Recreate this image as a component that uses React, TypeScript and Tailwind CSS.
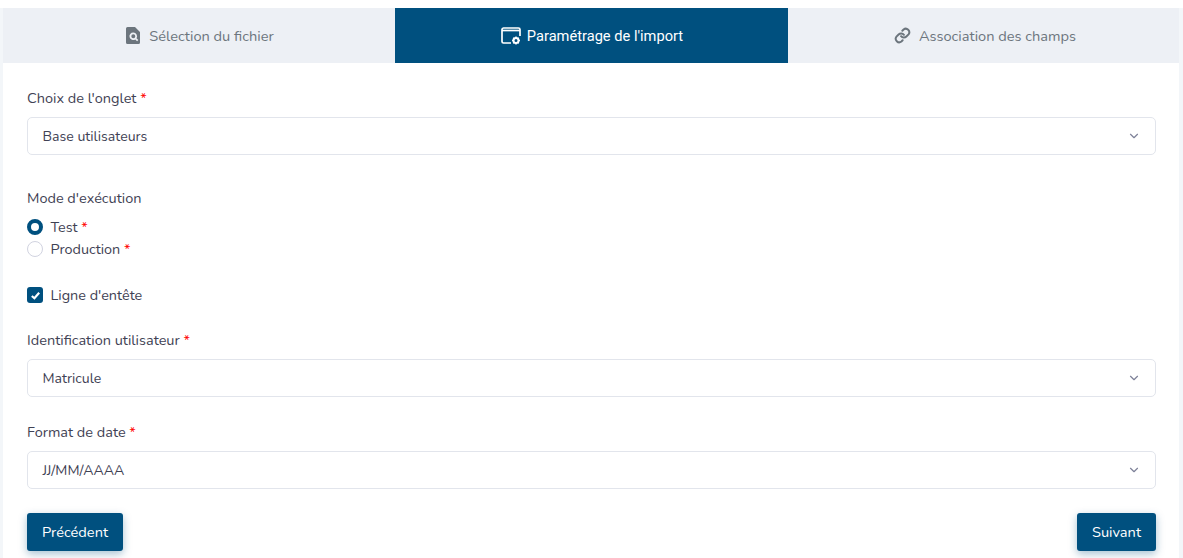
import { ChevronDown } from "lucide-react";

function Star() {
  return <span className="text-[#f00]"> *</span>;
}

function SelectField({ label, value }: { label: string; value: string }) {
  return (
    <div>
      <div className="h-[21px] pt-px text-[14.500px] leading-[21px] text-[#3f4254]">
        {label}
        <Star />
      </div>
      <div className="mt-[9px] flex h-[38px] items-center justify-between rounded-[5px] border border-[#e2e5ec] bg-white pl-[14.500px] pr-[14px] text-[14.100px] text-[#3f4254]">
        <span className="pt-[2px]">{value}</span>
        <ChevronDown className="h-[14px] w-[14px] text-[#7e8299]" strokeWidth={2} />
      </div>
    </div>
  );
}

function SearchFileIcon() {
  return (
    <svg viewBox="0 0 14 17" className="h-[17px] w-[14px]">
      <path
        fill="#6c757d"
        fillRule="evenodd"
        d="M1.500 0H9l5 5v10.500a1.500 1.500 0 0 1-1.500 1.500h-11A1.500 1.500 0 0 1 0 15.500v-14A1.500 1.500 0 0 1 1.500 0ZM7.300 5.500a3.800 3.800 0 1 0 2 7l1.800 1.800 1.200-1.200-1.800-1.800a3.800 3.800 0 0 0-3.200-5.800Zm0 1.800a2 2 0 1 1 0 4 2 2 0 0 1 0-4Z"
      />
    </svg>
  );
}

function WindowGearIcon() {
  return (
    <svg viewBox="0 0 20 18" className="h-[18px] w-5" fill="none">
      <path
        stroke="#fff"
        strokeWidth="1.700"
        d="M10 16H2.500A1.600 1.600 0 0 1 1 14.400V2.600A1.600 1.600 0 0 1 2.500 1h14.900A1.600 1.600 0 0 1 19 2.600V9"
      />
      <path stroke="#fff" strokeWidth="1.700" d="M1 3.500h18" />
      <circle cx="15" cy="13.500" r="2.500" stroke="#fff" strokeWidth="2" />
      <path
        stroke="#fff"
        strokeWidth="1.400"
        d="M15 9.500v1.500M15 16v1.500M11 13.500h1.500M17.500 13.500H19M12.200 10.700l1 1M16.800 15.300l1 1M12.200 16.300l1-1M16.800 11.700l1-1"
      />
    </svg>
  );
}

function LinkIcon() {
  return (
    <svg viewBox="0 0 24 24" className="h-[17px] w-[17px]" fill="none" stroke="#6c757d" strokeWidth="2.800" strokeLinecap="round">
      <path d="M10 13a5 5 0 0 0 7.500.5l3-3a5 5 0 0 0-7-7l-1.700 1.700" />
      <path d="M14 11a5 5 0 0 0-7.500-.5l-3 3a5 5 0 0 0 7 7l1.700-1.700" />
    </svg>
  );
}

export default function App() {
  return (
    <div className="h-[558px] w-[1183px] overflow-hidden bg-white font-['Nunito','Noto_Sans','Open_Sans',sans-serif]">
      <div className="h-2 bg-white" />
      <div className="h-[550px] bg-[#f3f6f9] pl-[3px] pr-1">
        <div className="grid h-[55px] grid-cols-[392px_393px_391px] text-[14.600px]">
          <div className="flex items-center justify-center gap-[9px] bg-[#edf0f5] pl-[2px] text-[#6c757d]">
            <SearchFileIcon />
            <span className="pt-[2px]">Sélection du fichier</span>
          </div>
          <div className="flex items-center justify-center gap-[6px] bg-[#00507f] pl-px font-['Roboto',sans-serif] text-[14.650px] text-white">
            <WindowGearIcon />
            <span className="pt-[2px]">Paramétrage de l'import</span>
          </div>
          <div className="flex items-center justify-center gap-2 bg-[#edf0f5] pl-[3px] text-[#6c757d]">
            <LinkIcon />
            <span className="pt-[2px]">Association des champs</span>
          </div>
        </div>

        <div className="h-[495px] bg-white pl-6 pr-[23px] pt-6">
          <SelectField label="Choix de l'onglet" value="Base utilisateurs" />

          <div className="mt-[32px] h-[21px] pt-px text-[14.500px] leading-[21px] text-[#3f4254]">Mode d'exécution</div>
          <div className="mt-[8px] flex h-[22px] items-center gap-[7.500px] text-[14.400px] text-[#3f4254]">
            <span className="h-4 w-4 rounded-full border-[4px] border-[#00507f] bg-white" />
            <span className="pt-[2px]">
              Test
              <Star />
            </span>
          </div>
          <div className="flex h-[22px] items-center gap-[7.500px] text-[14.400px] text-[#3f4254]">
            <span className="h-4 w-4 rounded-full border border-[#d1d3e0] bg-white" />
            <span className="pt-[2px]">
              Production
              <Star />
            </span>
          </div>

          <div className="mt-[24px] flex h-[22px] items-center gap-[7.500px] text-[14.400px] text-[#3f4254]">
            <span className="flex h-4 w-4 items-center justify-center rounded-[3px] bg-[#00507f]">
              <svg viewBox="0 0 12 12" className="h-[11px] w-[11px]" fill="none" stroke="#fff" strokeWidth="2.400">
                <path d="M2 6.500 4.800 9 10 3" />
              </svg>
            </span>
            <span className="pt-[2px]">Ligne d'entête</span>
          </div>

          <div className="mt-[23px]">
            <SelectField label="Identification utilisateur" value="Matricule" />
          </div>
          <div className="mt-[24px]">
            <SelectField label="Format de date" value="JJ/MM/AAAA" />
          </div>

          <div className="mt-6 flex justify-between">
            <button className="h-[38px] rounded-[3px] bg-[#00507f] px-[15px] pt-px text-[14.600px] text-white shadow-[0_3px_8px_rgba(0,80,127,0.35)]">
              Précédent
            </button>
            <button className="h-[38px] rounded-[3px] bg-[#00507f] px-[15px] pt-px text-[14.600px] text-white shadow-[0_3px_8px_rgba(0,80,127,0.35)]">
              Suivant
            </button>
          </div>
        </div>
      </div>
    </div>
  );
}
